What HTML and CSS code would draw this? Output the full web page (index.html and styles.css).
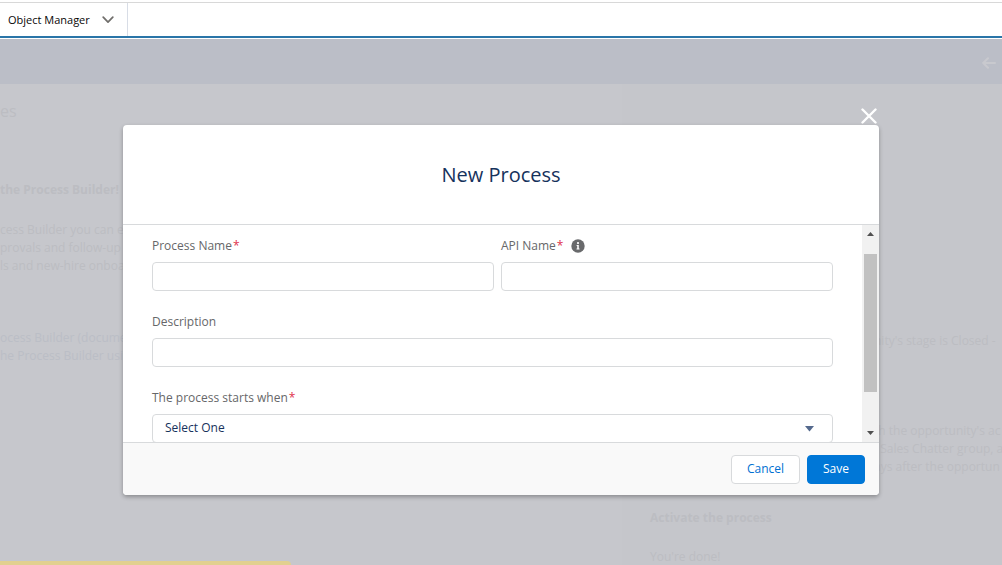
FILE: index.html
```html
<!DOCTYPE html>
<html lang="en">
<head>
<meta charset="utf-8">
<title>New Process</title>
<link rel="stylesheet" href="styles.css">
</head>
<body>
<nav class="tabs">
  <button class="tab" type="button">Object Manager
    <svg class="tab-icon" width="12" height="8" viewBox="0 0 12 8" fill="none" stroke="#706e6b" stroke-width="1.7" stroke-linecap="round" stroke-linejoin="round"><path d="M1.2 1.2 6 6.2 10.8 1.2"/></svg>
  </button>
</nav>
<main class="stage">
  <div class="page">
    <div class="page-bar">
      <svg width="14" height="12" viewBox="0 0 14 12" fill="none" stroke="#c8c9ce" stroke-width="2" stroke-linecap="round" stroke-linejoin="round"><path d="M13 6H1.5M6 1.2 1.2 6 6 10.8"/></svg>
    </div>
    <div class="columns">
      <section class="intro">
        <h1 class="page-title">es</h1>
        <h2 class="topic">the Process Builder!</h2>
        <p class="copy">cess Builder you can ea<br>provals and follow-up e<br>ls and new-hire onboa</p>
        <p class="copy links">ocess Builder (documen<br>he Process Builder usin</p>
      </section>
      <section class="guide">
        <p class="copy indent">nity's stage is Closed -</p>
        <p class="copy indent actions">th the opportunity's ac<br>&nbsp;&nbsp;Sales Chatter group, a<br>ays after the opportun</p>
        <h2 class="topic">Activate the process</h2>
        <p class="copy done">You're done!</p>
      </section>
    </div>
  </div>
  <div class="notice"></div>
  <div class="overlay">
    <div class="dialog" role="dialog" aria-labelledby="dialog-title">
      <button class="close" type="button" aria-label="Close">
        <svg width="16" height="16" viewBox="0 0 16 16" fill="none" stroke="#fff" stroke-width="2.4" stroke-linecap="round"><path d="M1.5 1.5 14.5 14.5M14.5 1.5 1.5 14.5"/></svg>
      </button>
      <form class="card">
        <header class="card-head"><h2 class="card-title" id="dialog-title">New Process</h2></header>
        <div class="card-body">
          <div class="fields">
            <div class="row">
              <div class="field">
                <label class="label" for="name">Process Name<span class="req">*</span></label>
                <input class="control" id="name" type="text">
              </div>
              <div class="field">
                <label class="label" for="api">API Name<span class="req">*</span>
                  <svg class="info" width="14" height="14" viewBox="0 0 14 14"><circle cx="7" cy="7" r="6.7" fill="#696a6c"/><circle cx="7" cy="4.1" r="1.1" fill="#fff"/><path d="M5.6 6h2.2v3.4h.7v1H5.5v-1h.7V7h-.6z" fill="#fff"/></svg>
                </label>
                <input class="control" id="api" type="text">
              </div>
            </div>
            <div class="field">
              <label class="label" for="description">Description</label>
              <input class="control" id="description" type="text">
            </div>
            <div class="field">
              <label class="label" for="start">The process starts when<span class="req">*</span></label>
              <div class="picker">
                <select class="control select" id="start"><option>Select One</option></select>
                <svg class="picker-icon" width="9" height="6" viewBox="0 0 9 6"><path d="M0 0h9L4.5 5.5z" fill="#54698d"/></svg>
              </div>
            </div>
          </div>
          <div class="scroll" aria-hidden="true">
            <svg width="7" height="4" viewBox="0 0 7 4"><path d="M3.5 0 7 4H0z" fill="#505050"/></svg>
            <div class="thumb"></div>
            <svg width="7" height="4" viewBox="0 0 7 4"><path d="M0 0h7L3.5 4z" fill="#505050"/></svg>
          </div>
        </div>
        <footer class="card-foot">
          <button class="button" type="button">Cancel</button>
          <button class="button primary" type="button">Save</button>
        </footer>
      </form>
    </div>
  </div>
</main>
</body>
</html>
```
FILE: styles.css
```css
* { box-sizing: border-box; }
body {
  margin: 0;
  height: 100vh;
  display: flex;
  flex-direction: column;
  overflow: hidden;
  background: #fff;
  font-family: "Open Sans", "Noto Sans", sans-serif;
  font-size: 12px;
  line-height: 18px;
}
h1, h2, p { margin: 0; }
button, input, select { font: inherit; }
svg { display: block; flex: none; }

.tabs {
  display: flex;
  flex: none;
  height: 36px;
  margin-top: 2px;
  border-top: 1px solid #d8d8d8;
  border-bottom: 2px solid #2a75a8;
}
.tab {
  display: flex;
  align-items: center;
  gap: 12px;
  padding: 0 13px 0 8px;
  border: 0;
  border-right: 1px solid #d8dde6;
  background: #fff;
  color: #080707;
  font-size: 11px;
}

.stage {
  position: relative;
  flex: 1;
  min-height: 0;
  margin-top: 1px;
  overflow: hidden;
  background: #c6c7cc;
}
.page { height: 100%; display: flex; flex-direction: column; }
.page-bar {
  display: flex;
  flex: none;
  justify-content: flex-end;
  align-items: center;
  height: 45px;
  padding: 3px 6px 0 0;
  background: #bbbec7;
}
.columns {
  flex: 1;
  min-height: 0;
  display: grid;
  grid-template-columns: 622px 1fr;
  color: #bcbdc2;
  white-space: nowrap;
}
.page-title { margin-top: 15px; font-size: 16px; line-height: 24px; font-weight: 400; }
.topic { font-size: 12px; line-height: 18px; font-weight: 700; }
.intro .topic { margin-top: 58px; }
.intro .copy { margin-top: 22px; }
.intro .links { margin-top: 54px; color: #bbbec6; }
.guide {
  padding: 248px 0 0 28px;
  overflow: hidden;
  background: #c5c6cb;
}
.indent { padding-left: 224px; }
.actions { margin-top: 72px; }
.guide .topic { margin-top: 33px; }
.done { margin-top: 21px; }
.notice {
  position: absolute;
  left: 0;
  bottom: 0;
  width: 29%;
  height: 4px;
  border-radius: 0 4px 0 0;
  background: #e2d08f;
}

.overlay {
  position: absolute;
  inset: 0;
  display: flex;
  align-items: center;
  justify-content: center;
  padding-bottom: 2px;
}
.dialog {
  width: 90%;
  max-width: 756px;
  display: flex;
  flex-direction: column;
  align-items: flex-end;
}
.close { padding: 0; margin: 0 2px 1px 0; border: 0; background: none; }
.card {
  width: 100%;
  overflow: hidden;
  border-radius: 4px;
  background: #fff;
  box-shadow: 0 2px 4px rgba(0, 0, 0, 0.3);
}
.card-head {
  padding: 35px 16px 34px;
  border-bottom: 1px solid #d8dadc;
  text-align: center;
}
.card-title { color: #16325c; font-size: 20px; line-height: 30px; font-weight: 400; }
.card-body { display: flex; }
.fields {
  flex: 1;
  display: flex;
  flex-direction: column;
  gap: 22px;
  padding: 12px 29px 0;
}
.row { display: grid; grid-template-columns: 342fr 332fr; gap: 7px; }
.field { display: flex; flex-direction: column; gap: 7px; min-width: 0; }
.label { display: flex; align-items: center; color: #666769; }
.req { margin-left: 1px; color: #e0304c; }
.info { margin-left: 8px; }
.control {
  width: 100%;
  height: 29px;
  padding: 0 12px;
  border: 1px solid #d8dadc;
  border-radius: 4px;
  background: #fff;
  color: #16325c;
}
.picker { position: relative; height: 28px; overflow: hidden; }
.select { display: block; appearance: none; }
.picker-icon { position: absolute; right: 19px; top: 12px; pointer-events: none; }
.scroll {
  width: 17px;
  display: flex;
  flex-direction: column;
  align-items: center;
  padding: 7px 2px;
  background: #f1f1f1;
}
.thumb { width: 100%; flex: 1; margin: 18px 0 39px; background: #c1c1c1; }
.card-foot {
  display: flex;
  justify-content: flex-end;
  gap: 7px;
  padding: 12px 14px 11px;
  border-top: 1px solid #d8dadc;
  background: #f9f9f9;
}
.button {
  height: 29px;
  padding: 0 15px;
  border: 1px solid #d8dadc;
  border-radius: 4px;
  background: #fff;
  color: #0070d2;
}
.primary { border-color: #0077d7; background: #0077d7; color: #fff; }
```
